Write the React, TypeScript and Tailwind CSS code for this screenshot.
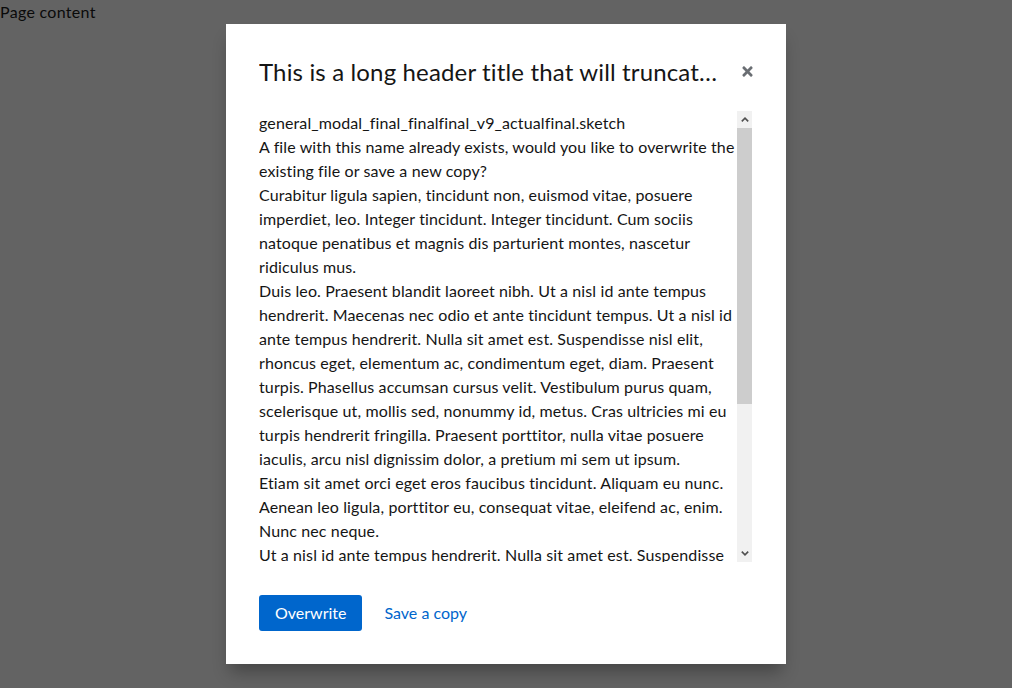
import React from 'react';

const paragraphs = [
    'general_modal_final_finalfinal_v9_actualfinal.sketch',
    'A file with this name already exists, would you like to overwrite the existing file or save a new copy?',
    'Curabitur ligula sapien, tincidunt non, euismod vitae, posuere imperdiet, leo. Integer tincidunt. Integer tincidunt. Cum sociis natoque penatibus et magnis dis parturient montes, nascetur ridiculus mus.',
    'Duis leo. Praesent blandit laoreet nibh. Ut a nisl id ante tempus hendrerit. Maecenas nec odio et ante tincidunt tempus. Ut a nisl id ante tempus hendrerit. Nulla sit amet est. Suspendisse nisl elit, rhoncus eget, elementum ac, condimentum eget, diam. Praesent turpis. Phasellus accumsan cursus velit. Vestibulum purus quam, scelerisque ut, mollis sed, nonummy id, metus. Cras ultricies mi eu turpis hendrerit fringilla. Praesent porttitor, nulla vitae posuere iaculis, arcu nisl dignissim dolor, a pretium mi sem ut ipsum.',
    'Etiam sit amet orci eget eros faucibus tincidunt. Aliquam eu nunc. Aenean leo ligula, porttitor eu, consequat vitae, eleifend ac, enim. Nunc nec neque.',
    'Ut a nisl id ante tempus hendrerit. Nulla sit amet est. Suspendisse nisl elit, rhoncus eget, elementum ac, condimentum eget, diam. Praesent turpis. Phasellus accumsan cursus velit. Vestibulum purus quam, scelerisque ut, mollis sed, nonummy id, metus. Cras ultricies mi eu turpis hendrerit fringilla.',
];

function Chevron({ up }: { up?: boolean }) {
    return (
        <svg viewBox="0 0 8 5" className={`w-2 h-[5px] ${up ? '' : 'rotate-180'}`} fill="none" stroke="#505050" strokeWidth="1.6">
            <path d="M0.8 4.4 4 1.2 7.2 4.4" />
        </svg>
    );
}

export default function App() {
    return (
        <div className="relative w-[1012px] h-[688px] overflow-hidden bg-white font-['Lato',sans-serif] text-[#151515]">
            <div className="text-base leading-6 tracking-[0.3px]">Page content</div>

            {/* backdrop */}
            <div className="absolute inset-0 bg-[rgba(3,3,3,0.62)] flex justify-center pt-6">
                <div className="w-[560px] h-[640px] bg-white shadow-[0_0.75rem_1rem_-0.25rem_rgba(3,3,3,0.3)] flex flex-col pt-8 pb-8">
                    <header className="flex items-center pl-[33px] pr-[27px] gap-4">
                        <h1 className="flex-1 min-w-0 truncate text-[24px] leading-[31px] font-normal tracking-[0.15px]">
                            This is a long header title that will truncate because modal titles should be very short
                        </h1>
                        <button className="w-6 h-6 flex items-center justify-center text-[#6a6e73]" aria-label="Close">
                            <svg viewBox="0 0 352 512" className="w-[11px] h-[15px]" fill="currentColor">
                                <path d="M242.72 256l100.07-100.07c12.28-12.28 12.28-32.19 0-44.48l-22.24-22.24c-12.28-12.28-32.19-12.28-44.48 0L176 189.28 75.930 89.21c-12.28-12.28-32.19-12.28-44.48 0L9.21 111.45c-12.28 12.28-12.28 32.19 0 44.48L109.28 256 9.21 356.07c-12.28 12.28-12.28 32.19 0 44.48l22.24 22.24c12.28 12.28 32.2 12.28 44.48 0L176 322.72l100.07 100.07c12.28 12.28 32.2 12.28 44.48 0l22.24-22.24c12.28-12.28 12.28-32.19 0-44.48L242.72 256z" />
                            </svg>
                        </button>
                    </header>

                    <div className="mt-6 ml-[33px] mr-[34px] h-[451px] flex">
                        <div className="flex-1 min-w-0 overflow-hidden text-base leading-6 tracking-[0.12px]">
                            {paragraphs.map((p, i) => (
                                <p key={i}>{p}</p>
                            ))}
                        </div>
                        {/* scrollbar */}
                        <div className="w-[15px] bg-[#f1f1f1] flex flex-col">
                            <div className="h-[17px] flex items-center justify-center"><Chevron up /></div>
                            <div className="h-[276px] bg-[#cdcdcd]" />
                            <div className="flex-1" />
                            <div className="h-[17px] flex items-center justify-center"><Chevron /></div>
                        </div>
                    </div>

                    <footer className="mt-[33px] pl-[33px] flex items-center gap-[6px]">
                        <button className="h-9 px-4 rounded-[3px] bg-[#0066cc] text-white text-base">Overwrite</button>
                        <button className="h-9 px-4 text-[#0066cc] text-base">Save a copy</button>
                    </footer>
                </div>
            </div>
        </div>
    );
}
